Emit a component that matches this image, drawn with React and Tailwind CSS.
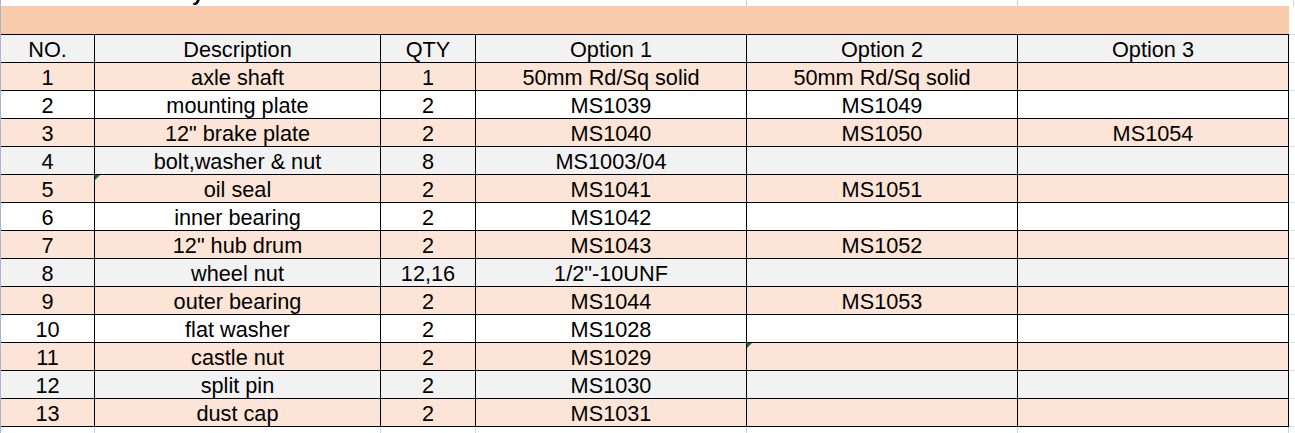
const cols = ['w-[94px]', 'w-[286px]', 'w-[95px]', 'w-[271px]', 'w-[271px]', 'w-[271px]']

const rowBg = {
  peach: 'bg-[#fce4d6]',
  white: 'bg-white',
  gray: 'bg-[#f2f2f2]',
}

const rows = [
  { no: '1', desc: 'axle shaft', qty: '1', o1: '50mm Rd/Sq solid', o2: '50mm Rd/Sq solid', o3: '', bg: 'peach' },
  { no: '2', desc: 'mounting plate', qty: '2', o1: 'MS1039', o2: 'MS1049', o3: '', bg: 'white' },
  { no: '3', desc: '12" brake plate', qty: '2', o1: 'MS1040', o2: 'MS1050', o3: 'MS1054', bg: 'peach' },
  { no: '4', desc: 'bolt,washer & nut', qty: '8', o1: 'MS1003/04', o2: '', o3: '', bg: 'gray' },
  { no: '5', desc: 'oil seal', qty: '2', o1: 'MS1041', o2: 'MS1051', o3: '', bg: 'peach', flag: 1 },
  { no: '6', desc: 'inner bearing', qty: '2', o1: 'MS1042', o2: '', o3: '', bg: 'white' },
  { no: '7', desc: '12" hub drum', qty: '2', o1: 'MS1043', o2: 'MS1052', o3: '', bg: 'peach' },
  { no: '8', desc: 'wheel nut', qty: '12,16', o1: '1/2"-10UNF', o2: '', o3: '', bg: 'gray' },
  { no: '9', desc: 'outer bearing', qty: '2', o1: 'MS1044', o2: 'MS1053', o3: '', bg: 'peach' },
  { no: '10', desc: 'flat washer', qty: '2', o1: 'MS1028', o2: '', o3: '', bg: 'white' },
  { no: '11', desc: 'castle nut', qty: '2', o1: 'MS1029', o2: '', o3: '', bg: 'peach', flag: 4 },
  { no: '12', desc: 'split pin', qty: '2', o1: 'MS1030', o2: '', o3: '', bg: 'gray' },
  { no: '13', desc: 'dust cap', qty: '2', o1: 'MS1031', o2: '', o3: '', bg: 'peach' },
]

const Cell = ({ w, children, flag }) => (
  <div className={`${w} relative h-[28px] shrink-0 border-r border-b border-black flex items-end justify-center leading-[24px] whitespace-nowrap`}>
    {flag && (
      <span className="absolute top-0 left-0 w-0 h-0 border-t-[5px] border-r-[5px] border-t-[#0f7a17] border-r-transparent" />
    )}
    {children}
  </div>
)

const Row = ({ cells, bg, flag }) => (
  <div className="flex">
    <div className={`flex ${bg}`}>
      {cells.map((c, i) => (
        <Cell key={i} w={cols[i]} flag={flag === i}>{c}</Cell>
      ))}
    </div>
    <div className="flex-1 h-[28px] border-b border-[#d5dbe8]" />
  </div>
)

export default function App() {
  return (
    <div
      className="w-[1295px] h-[433px] overflow-hidden bg-white border-l border-[#a9b3cc] text-black text-[21.7px]"
      style={{ fontFamily: '"Liberation Sans", Arial, sans-serif' }}
    >
      {/* ── Title row (cut off) ── */}
      <div className="flex h-[6px] overflow-hidden">
        <div className="w-[745px] shrink-0 pl-[191px]">
          <div className="-mt-[18px] font-bold leading-[21px]">y</div>
        </div>
        <div className="w-[271px] shrink-0 border-l border-[#c9d1e3]" />
        <div className="w-[271px] shrink-0 border-l border-[#c9d1e3]" />
        <div className="w-[5px] shrink-0" />
        <div className="flex-1 border-l border-[#c9d1e3]" />
      </div>

      {/* ── Orange band ── */}
      <div className="flex">
        <div className="w-[1288px] h-[29px] shrink-0 bg-[#f8cbad] border-b border-black" />
        <div className="flex-1 h-[29px] border-b border-[#d5dbe8]" />
      </div>

      {/* ── Header ── */}
      <Row bg={rowBg.gray} cells={['NO.', 'Description', 'QTY', 'Option 1', 'Option 2', 'Option 3']} />

      {/* ── Parts ── */}
      {rows.map((r) => (
        <Row key={r.no} bg={rowBg[r.bg]} flag={r.flag} cells={[r.no, r.desc, r.qty, r.o1, r.o2, r.o3]} />
      ))}

      {/* ── Empty sheet below ── */}
      <div className="flex h-[7px]">
        {cols.map((w, i) => (
          <div key={i} className={`${w} shrink-0 border-r border-[#c9d1e3]`} />
        ))}
        <div className="flex-1" />
      </div>
    </div>
  )
}
